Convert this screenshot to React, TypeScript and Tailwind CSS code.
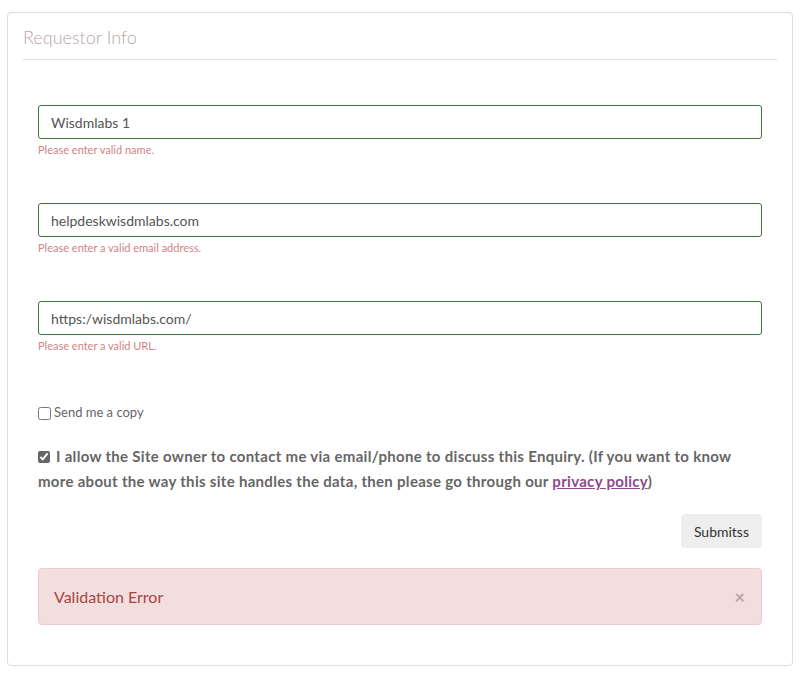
const fields = [
  { value: 'Wisdmlabs 1', error: 'Please enter valid name.' },
  { value: 'helpdeskwisdmlabs.com', error: 'Please enter a valid email address.' },
  { value: 'https:/wisdmlabs.com/', error: 'Please enter a valid URL.' },
];

export default function App() {
  return (
    <div className="bg-white min-h-[674px] pl-[7px] pr-[12px] pt-[12px] text-[#555]" style={{ fontFamily: 'Lato, "Open Sans", sans-serif' }}>
      <div className="border border-[#ddd] rounded-[4px] px-[15px] pt-[12px] pb-[40px] h-[654px]">
        {/* Header */}
        <h3 className="text-[18px] font-light text-[#b8a8a8] leading-[24px] pb-[10px] border-b border-[#ddd]">
          Requestor Info
        </h3>

        <div className="px-[15px] pt-[45px]">
          {fields.map((f, i) => (
            <div key={i} className="h-[98px]">
              <div className="h-[34px] border border-[#3c763d] rounded-[3px] flex items-center px-[12px] text-[14px] text-[#555]">
                {f.value}
              </div>
              <p className="text-[11px] text-[#d08484] mt-[3px] leading-[16px]">{f.error}</p>
            </div>
          ))}

          <label className="flex items-center gap-[2px] text-[13px] text-[#666] mt-[4px] h-[20px]">
            <input type="checkbox" className="w-[13px] h-[13px] m-0 mr-[1px]" />
            Send me a copy
          </label>

          <p className="mt-[21px] text-[15px] font-bold text-[#666] leading-[25px] tracking-[0.3px]">
            <input type="checkbox" defaultChecked className="w-[12px] h-[12px] mr-[6px] align-[-1px] accent-[#666]" />
            I allow the Site owner to contact me via email/phone to discuss this Enquiry. (If you want to know more about the way this site handles the data, then please go through our{' '}
            <a href="#" className="text-[#8b4b8b] underline">privacy policy</a>)
          </p>

          <div className="flex justify-end mt-[20px]">
            <button className="h-[34px] px-[13px] bg-[#eee] rounded-[4px] text-[14px] text-[#333]">Submitss</button>
          </div>

          <div className="mt-[20px] h-[57px] bg-[#f2dede] border border-[#ebccd1] rounded-[4px] flex items-center justify-between pl-[15px] pr-[16px]">
            <span className="text-[16px] text-[#a94442]">Validation Error</span>
            <span className="text-[18px] font-bold text-[#b8a4a4] leading-none">×</span>
          </div>
        </div>
      </div>
    </div>
  );
}
